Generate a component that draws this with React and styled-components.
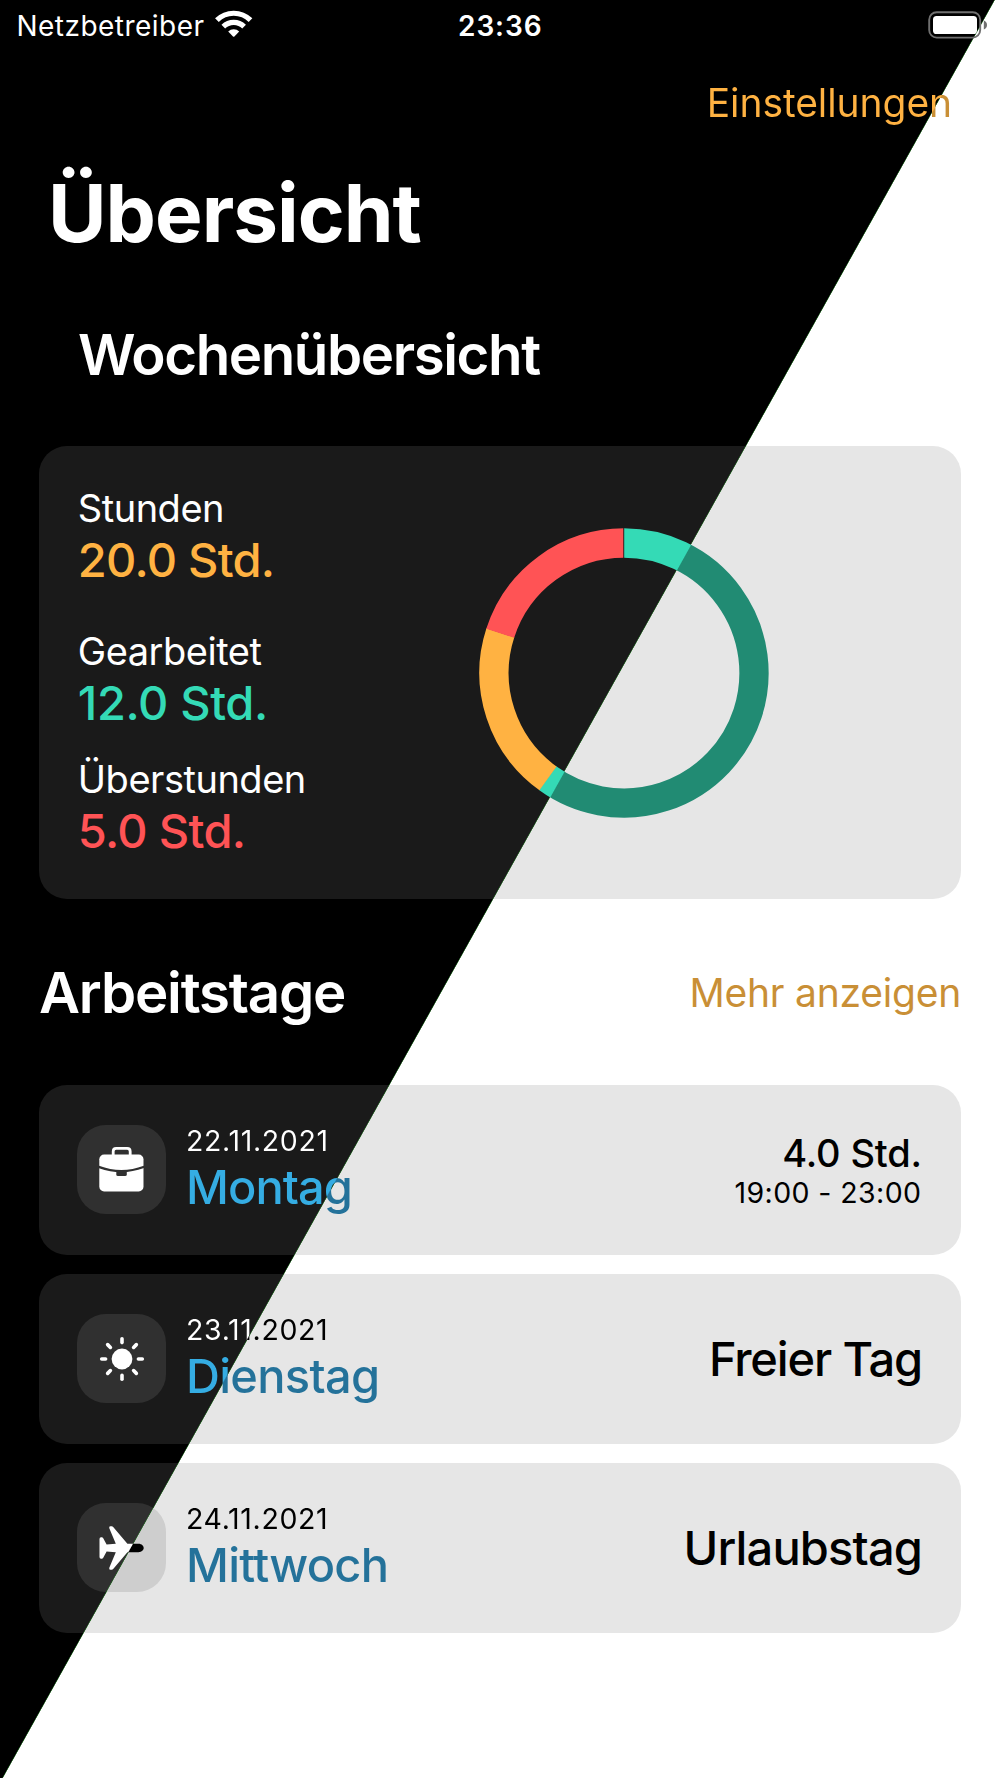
import React from "react";
import styled, { createGlobalStyle, css } from "styled-components";

/* The screen is divided by one diagonal: dark theme on the left, light theme on the right. */
const DIAGONAL = { x: 498.6, y: 889, nx: 0.8733, ny: 0.4872 };

const dark = {
  page: "#000000",
  card: "#1a1a1a",
  tile: "#303030",
  ink: "#ffffff",
  orange: "#ffb242",
  teal: "#34dab6",
  red: "#ff5355",
  blue: "#35ade3",
};

const light = {
  page: "#ffffff",
  card: "#e6e6e6",
  tile: "#cecece",
  ink: "#000000",
  orange: "#c98f36",
  teal: "#218b73",
  blue: "#24729a",
};

const splitFill = (name, seam) => css`
  background-image: linear-gradient(
    119.16deg,
    ${dark[name]} calc(50% - 1.8px),
    ${seam ? `${seam} calc(50% - 1.2px),` : ""}
    ${light[name]} calc(50% - 0.6px)
  );
  background-attachment: fixed;
`;

const splitInk = (name) => css`
  ${splitFill(name)}
  color: ${dark[name]};
  background-clip: text;
  -webkit-background-clip: text;
  -webkit-text-fill-color: transparent;
`;

const GlobalStyle = createGlobalStyle`
  * { box-sizing: border-box; }
  body { margin: 0; }
  h1, h2, p { margin: 0; }
`;

const Screen = styled.main`
  width: 1000px;
  height: 1778px;
  overflow: hidden;
  font-family: Inter, "Liberation Sans", sans-serif;
  color: ${dark.ink};
  white-space: nowrap;
  ${splitFill("page", "#2c6e2c")}
`;

const StatusBar = styled.header`
  display: grid;
  grid-template-columns: 1fr auto 1fr;
  align-items: center;
  height: 51px;
  padding: 0 12px 0 16.5px;
  font-size: 28px;
`;

const Carrier = styled.div`
  display: flex;
  align-items: center;
  gap: 10.5px;
  letter-spacing: 0.47px;

  svg {
    margin-bottom: 3px;
  }
`;

const Clock = styled.time`
  font-weight: 600;
  letter-spacing: 0.9px;
  margin-left: -4px;
`;

const BatterySlot = styled.div`
  display: flex;
  justify-content: flex-end;
  margin-bottom: 2px;
`;

const NavBar = styled.nav`
  display: flex;
  align-items: center;
  justify-content: flex-end;
  height: 104px;
  padding-right: 48px;
`;

const LinkButton = styled.button`
  border: 0;
  padding: 0;
  background: none;
  font: 400 39px/50px Inter, "Liberation Sans", sans-serif;
  letter-spacing: -0.22px;
  color: ${light.orange};
`;

const SettingsButton = styled(LinkButton)`
  letter-spacing: -0.08px;
  ${splitInk("orange")}
`;

const PageTitle = styled.h1`
  padding-left: 48px;
  font-size: 80px;
  font-weight: 700;
  line-height: 115px;
  letter-spacing: -1px;
`;

const SectionTitle = styled.h2`
  font-size: 56.4px;
  font-weight: 600;
  line-height: 168px;
  letter-spacing: ${(p) => p.$tracking}px;
`;

const WeekHeader = styled.div`
  padding: 1px 39px 7px 78px;
`;

const Content = styled.div`
  padding: 0 39px;
`;

const Card = styled.section`
  border-radius: 28px;
  ${splitFill("card", "#2c6e2c")}
`;

const SummaryCard = styled(Card)`
  display: flex;
  align-items: center;
  height: 453px;
  padding-left: 38.8px;
`;

const Stats = styled.div`
  flex: 0 0 400.9px;
  align-self: flex-start;
  padding-top: 39px;
`;

const Stat = styled.div`
  margin-bottom: ${(p) => p.$after}px;
`;

const StatLabel = styled.p`
  font-size: 38px;
  line-height: 46px;
  letter-spacing: -0.48px;
`;

const StatValue = styled.p`
  font-size: 47px;
  font-weight: 500;
  line-height: 58px;
  letter-spacing: ${(p) => p.$tracking}px;
  color: ${(p) => dark[p.$tone]};
`;

const DaysHeader = styled.div`
  display: flex;
  align-items: center;
  justify-content: space-between;
  height: 186px;
  padding-top: 1px;
`;

const DayList = styled.div`
  display: flex;
  flex-direction: column;
  gap: 19.5px;
`;

const DayRow = styled(Card)`
  display: flex;
  align-items: center;
  height: 169.5px;
  padding: 0 39px 0 38px;
`;

const IconTile = styled.div`
  display: flex;
  align-items: center;
  justify-content: center;
  width: 89px;
  height: 89px;
  margin-right: 20px;
  border-radius: 29px;
  ${splitFill("tile", "#2c6e2c")}
`;

const DayText = styled.div`
  flex: 1;
  display: flex;
  flex-direction: column;
  align-items: flex-start;
  padding-top: 2px;
`;

const DayDate = styled.p`
  font-size: 28.5px;
  line-height: 34px;
  letter-spacing: 0.65px;
  ${splitInk("ink")}
`;

const DayName = styled.p`
  font-size: 47px;
  font-weight: 500;
  line-height: 58.6px;
  letter-spacing: ${(p) => p.$tracking}px;
  ${splitInk("blue")}
`;

const DayResult = styled.div`
  text-align: right;
  color: ${light.ink};
`;

const Hours = styled.p`
  font-size: 38px;
  font-weight: 500;
  line-height: 46px;
  letter-spacing: -0.15px;
`;

const TimeRange = styled.p`
  font-size: 28.5px;
  line-height: 34px;
  letter-spacing: 0.4px;
  padding-right: 0.6px;
`;

const DayOff = styled.p`
  font-size: 47px;
  font-weight: 500;
  line-height: 58px;
  letter-spacing: ${(p) => p.$tracking}px;
`;

/* Gradient across the diagonal for a drawing whose local origin lies at (x, y) on the screen. */
function SplitGradient({ id, x, y, from, to }) {
  const cx = DIAGONAL.x - x;
  const cy = DIAGONAL.y - y;
  return (
    <linearGradient
      id={id}
      gradientUnits="userSpaceOnUse"
      x1={cx - DIAGONAL.nx * 0.5}
      y1={cy - DIAGONAL.ny * 0.5}
      x2={cx + DIAGONAL.nx * 0.5}
      y2={cy + DIAGONAL.ny * 0.5}
    >
      <stop offset="0" stopColor={from} />
      <stop offset="1" stopColor={to} />
    </linearGradient>
  );
}

function WifiIcon() {
  return (
    <svg width="38" height="28" viewBox="5 6 38 28">
      <g fill="none" stroke="#fff" strokeWidth="5.2">
        <path d="M6.9 16.2A23.8 23.8 0 0 1 40.5 16.2" />
        <path d="M13.3 22.6A14.7 14.7 0 0 1 34.1 22.6" />
      </g>
      <path d="M18.2 27.6A7.7 7.7 0 0 1 29.2 27.6L24.4 32.5Q23.7 33.2 23 32.5Z" fill="#fff" />
    </svg>
  );
}

function BatteryIcon() {
  return (
    <svg width="60" height="28" viewBox="0 0 60 28">
      <rect x="1.2" y="1.2" width="51" height="25.4" rx="7.5" fill="none" stroke="#707070" strokeWidth="1.9" />
      <rect x="5" y="5" width="44" height="18" rx="3.6" fill="#fff" />
      <path d="M55.8 9.6Q59 10.8 59 14T55.8 18.4Z" fill="#707070" />
    </svg>
  );
}

function BriefcaseIcon() {
  return (
    <svg width="44.6" height="44.6" viewBox="9.4 7.2 44.6 44.6">
      <path
        d="M23.6 16V11.6Q23.6 8.6 26.6 8.6H37.6Q40.6 8.6 40.6 11.6V16"
        fill="none"
        stroke="#fff"
        strokeWidth="2.8"
      />
      <rect x="9.7" y="14.7" width="44.2" height="37" rx="4.8" fill="#fff" />
      <path d="M9 27Q31.8 35.6 54.6 27" fill="none" stroke={dark.tile} strokeWidth="2.3" />
      <path d="M26.7 30.8H37.2V34.6Q37.2 36.3 35.5 36.3H28.4Q26.7 36.3 26.7 34.6Z" fill={dark.tile} />
    </svg>
  );
}

const RAYS = [0, 45, 90, 135, 180, 225, 270, 315];

function SunIcon() {
  return (
    <svg width="46" height="46" viewBox="-23 -23 46 46">
      <circle r="10.4" fill="#fff" />
      {RAYS.map((angle) => (
        <line
          key={angle}
          y1="-16.4"
          y2="-20.3"
          stroke="#fff"
          strokeWidth="3.6"
          strokeLinecap="round"
          transform={`rotate(${angle})`}
        />
      ))}
    </svg>
  );
}

function PlaneIcon() {
  return (
    <svg width="45" height="44" viewBox="9.4 10.8 45 44">
      <defs>
        <SplitGradient id="plane-ink" x={90} y={1515} from={dark.ink} to={light.ink} />
      </defs>
      <path
        fill="url(#plane-ink)"
        d="M9.9 23.8Q9.9 22 11.4 22H12.2Q13 22 13.5 22.8L17 29.2L26.2 28.6L19.7 13Q19.1 11 20.8 11H22Q23 11 23.8 12L37.8 28.6H48.8C52.3 28.6 54.1 31 54.1 32.8C54.1 34.6 52.3 37 48.8 37H37.8L23.8 53.6Q23 54.6 22 54.6H20.8Q19.1 54.6 19.7 52.6L26.2 37L17 36.4L13.5 42.8Q13 43.6 12.2 43.6H11.4Q9.9 43.6 9.9 41.8Z"
      />
    </svg>
  );
}

const SHARES = [
  { id: "worked", share: 0.6, color: "url(#ring-teal)" },
  { id: "planned", share: 0.2, color: dark.orange },
  { id: "overtime", share: 0.2, color: dark.red },
];

function HoursRing() {
  const radius = 130;
  const overlap = 0.004;
  let start = 0;
  return (
    <svg width="290" height="290" viewBox="0 0 290 290">
      <defs>
        <SplitGradient id="ring-teal" x={478.7} y={527.5} from={dark.teal} to={light.teal} />
      </defs>
      {SHARES.map(({ id, share, color }) => {
        const a0 = start * 2 * Math.PI - (start > 0 ? overlap : 0);
        start += share;
        const a1 = start * 2 * Math.PI;
        const at = (a) => `${145 + radius * Math.sin(a)} ${145 - radius * Math.cos(a)}`;
        return (
          <path
            key={id}
            d={`M${at(a0)}A${radius} ${radius} 0 ${share > 0.5 ? 1 : 0} 1 ${at(a1)}`}
            fill="none"
            stroke={color}
            strokeWidth="29.3"
          />
        );
      })}
      <rect x="144.3" y="0" width="0.9" height="30" fill={dark.card} />
    </svg>
  );
}

const STATS = [
  { label: "Stunden", value: "20.0 Std.", tone: "orange", tracking: -0.73, after: 38.5 },
  { label: "Gearbeitet", value: "12.0 Std.", tone: "teal", tracking: -0.38, after: 24.5 },
  { label: "Überstunden", value: "5.0 Std.", tone: "red", tracking: -0.67, after: 0 },
];

const DAYS = [
  { date: "22.11.2021", name: "Montag", tracking: -0.95, icon: BriefcaseIcon, hours: "4.0 Std.", range: "19:00 - 23:00" },
  { date: "23.11.2021", name: "Dienstag", tracking: -0.7, icon: SunIcon, off: "Freier Tag", offTracking: -1.15 },
  { date: "24.11.2021", name: "Mittwoch", tracking: -0.75, icon: PlaneIcon, off: "Urlaubstag", offTracking: -0.85 },
];

export default function App() {
  return (
    <Screen>
      <GlobalStyle />
      <StatusBar>
        <Carrier>
          <span>Netzbetreiber</span>
          <WifiIcon />
        </Carrier>
        <Clock>23:36</Clock>
        <BatterySlot>
          <BatteryIcon />
        </BatterySlot>
      </StatusBar>
      <NavBar>
        <SettingsButton>Einstellungen</SettingsButton>
      </NavBar>
      <PageTitle>Übersicht</PageTitle>
      <WeekHeader>
        <SectionTitle $tracking={-1.4}>Wochenübersicht</SectionTitle>
      </WeekHeader>
      <Content>
        <SummaryCard>
          <Stats>
            {STATS.map((s) => (
              <Stat key={s.label} $after={s.after}>
                <StatLabel>{s.label}</StatLabel>
                <StatValue $tone={s.tone} $tracking={s.tracking}>
                  {s.value}
                </StatValue>
              </Stat>
            ))}
          </Stats>
          <HoursRing />
        </SummaryCard>
        <DaysHeader>
          <SectionTitle $tracking={-1.18}>Arbeitstage</SectionTitle>
          <LinkButton>Mehr anzeigen</LinkButton>
        </DaysHeader>
        <DayList>
          {DAYS.map(({ icon: Icon, ...day }) => (
            <DayRow key={day.date}>
              <IconTile>
                <Icon />
              </IconTile>
              <DayText>
                <DayDate>{day.date}</DayDate>
                <DayName $tracking={day.tracking}>{day.name}</DayName>
              </DayText>
              <DayResult>
                {day.off ? (
                  <DayOff $tracking={day.offTracking}>{day.off}</DayOff>
                ) : (
                  <>
                    <Hours>{day.hours}</Hours>
                    <TimeRange>{day.range}</TimeRange>
                  </>
                )}
              </DayResult>
            </DayRow>
          ))}
        </DayList>
      </Content>
    </Screen>
  );
}
